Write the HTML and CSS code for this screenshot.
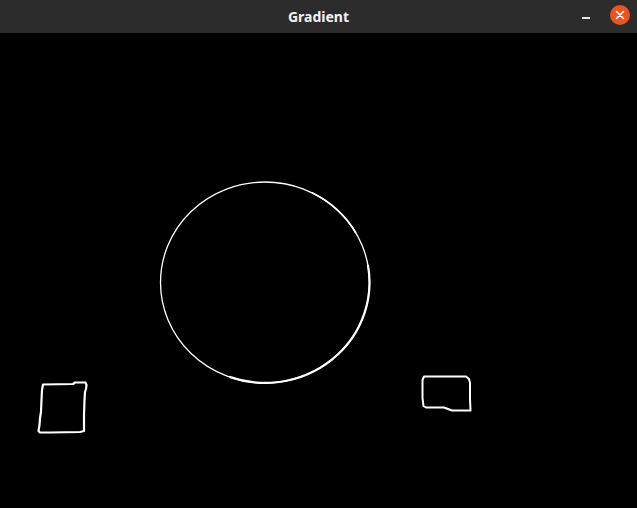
FILE: index.html
```html
<!DOCTYPE html>
<html>
<head>
<meta charset="utf-8">
<title>Gradient</title>
<link rel="stylesheet" href="styles.css">
</head>
<body>
<div class="window">
  <header class="titlebar">
    <div class="title">Gradient</div>
    <div class="controls">
      <span class="minimize"></span>
      <span class="close">
        <svg width="20" height="20" viewBox="0 0 20 20"><path d="M6.5 6.5 L13.5 13.5 M13.5 6.5 L6.5 13.5" stroke="#fff" stroke-width="1.6" stroke-linecap="round"/></svg>
      </span>
    </div>
  </header>
  <main class="canvas">
    <svg class="edges" width="637" height="475" viewBox="0 33 637 475">
      <ellipse cx="265" cy="282.5" rx="104.5" ry="100.5" fill="none" stroke="#fff" stroke-width="1.3"/>
      <path d="M367.9 265 A104.5 100.5 0 0 1 229.3 376.9" fill="none" stroke="#fff" stroke-width="2.2"/>
      <path d="M312 192.7 A104.5 100.5 0 0 1 356 233" fill="none" stroke="#fff" stroke-width="1.7"/>
      <path d="M43 384.5 L73 384 L75 382.5 L85.5 382.5 L86.5 385 L86 389 L85 392 L84.5 400 L84 415 L84 431 L80 432 L50 432.5 L40 432.5 L38.5 431 L39.5 425 L40 418 L41 412 L41.5 400 L42 390 Z" fill="none" stroke="#fff" stroke-width="2.2" stroke-linejoin="round"/>
      <path d="M424 376.5 L466 376.5 L469 379 L470 383 L470 399 L470.5 410.5 L452 410.5 L448 409 L444 407.5 L426 407.5 L423.5 406 L422.5 398 L422.5 380 Z" fill="none" stroke="#fff" stroke-width="2" stroke-linejoin="round"/>
    </svg>
  </main>
</div>
</body>
</html>
```
FILE: styles.css
```css
html, body {
  margin: 0;
  padding: 0;
  background: #000;
  overflow: hidden;
}
.window {
  width: 637px;
  height: 508px;
  display: flex;
  flex-direction: column;
}
.titlebar {
  height: 33px;
  flex: 0 0 33px;
  background: #2c2c2c;
  position: relative;
  display: flex;
  align-items: center;
  justify-content: center;
}
.title {
  font-family: "Noto Sans", "DejaVu Sans", sans-serif;
  font-weight: bold;
  font-size: 14px;
  color: #f2f2f2;
  letter-spacing: 0;
}
.controls {
  position: absolute;
  right: 7px;
  top: 0;
  height: 33px;
  display: flex;
  align-items: center;
  gap: 20px;
}
.minimize {
  display: block;
  width: 8px;
  height: 1.5px;
  background: #e8e8e8;
  margin-top: 3px;
}
.close {
  width: 20px;
  height: 20px;
  border-radius: 50%;
  background: #e95420;
  display: flex;
  margin-top: -3px;
}
.canvas {
  flex: 1;
  background: #000;
}
.edges {
  display: block;
}
```
